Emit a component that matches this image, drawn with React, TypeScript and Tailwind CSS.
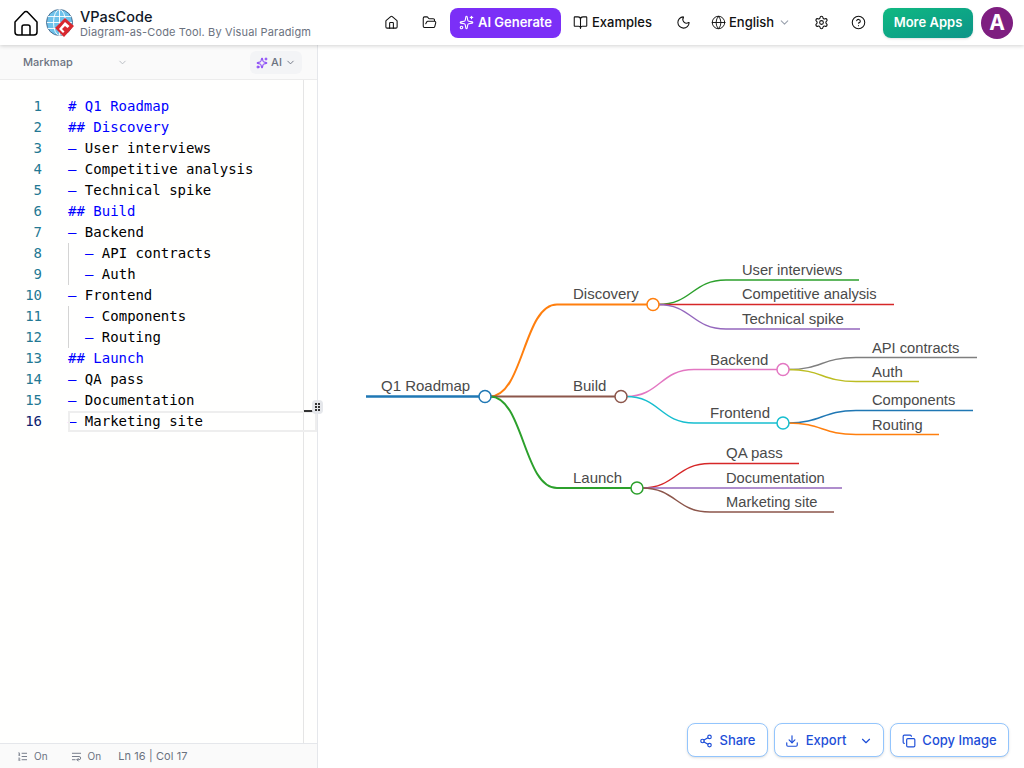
import React from "react";
import {
  BookOpen,
  ChevronDown,
  CircleHelp,
  Copy,
  FolderOpen,
  Globe,
  House,
  ListOrdered,
  Moon,
  Settings,
  Share2,
  Sparkles,
  Download,
  WrapText,
} from "lucide-react";

type Line = { text: string; kind: "head" | "item"; indent?: boolean };

const lines: Line[] = [
  { text: "# Q1 Roadmap", kind: "head" },
  { text: "## Discovery", kind: "head" },
  { text: "User interviews", kind: "item" },
  { text: "Competitive analysis", kind: "item" },
  { text: "Technical spike", kind: "item" },
  { text: "## Build", kind: "head" },
  { text: "Backend", kind: "item" },
  { text: "API contracts", kind: "item", indent: true },
  { text: "Auth", kind: "item", indent: true },
  { text: "Frontend", kind: "item" },
  { text: "Components", kind: "item", indent: true },
  { text: "Routing", kind: "item", indent: true },
  { text: "## Launch", kind: "head" },
  { text: "QA pass", kind: "item" },
  { text: "Documentation", kind: "item" },
  { text: "Marketing site", kind: "item" },
];

const curve = (x1: number, y1: number, x2: number, y2: number) => {
  const mid = (x1 + x2) / 2;
  return `M${x1} ${y1}C${mid} ${y1} ${mid} ${y2} ${x2} ${y2}`;
};

const links = [
  { d: "M366 396.5H485", color: "#1f77b4", w: 2.5 },
  { d: curve(490, 396.5, 557, 304.5) + "H653", color: "#ff7f0e", w: 2 },
  { d: "M490 396.5H621", color: "#8c564b", w: 2 },
  { d: curve(490, 396.5, 557, 488) + "H637", color: "#2ca02c", w: 2 },
  { d: curve(658, 304.5, 726, 280) + "H859", color: "#2ca02c", w: 1.5 },
  { d: "M658 304.5H894", color: "#d62728", w: 1.5 },
  { d: curve(658, 304.5, 726, 329) + "H860", color: "#9467bd", w: 1.5 },
  { d: curve(626, 396.5, 694, 369.5) + "H783", color: "#e377c2", w: 1.5 },
  { d: curve(626, 396.5, 694, 423) + "H783", color: "#17becf", w: 1.5 },
  { d: curve(788, 369.5, 856, 357.5) + "H977", color: "#7f7f7f", w: 1.5 },
  { d: curve(788, 369.5, 856, 381.5) + "H919", color: "#bcbd22", w: 1.5 },
  { d: curve(788, 423, 856, 410.5) + "H973", color: "#1f77b4", w: 1.5 },
  { d: curve(788, 423, 856, 434.5) + "H939", color: "#ff7f0e", w: 1.5 },
  { d: curve(642, 488, 710, 463.5) + "H799", color: "#d62728", w: 1.5 },
  { d: "M642 488H842", color: "#9467bd", w: 1.5 },
  { d: curve(642, 488, 710, 512) + "H834", color: "#8c564b", w: 1.5 },
];

const circles = [
  { x: 485, y: 396.5, color: "#1f77b4" },
  { x: 653, y: 304.5, color: "#ff7f0e" },
  { x: 621, y: 396.5, color: "#8c564b" },
  { x: 637, y: 488, color: "#2ca02c" },
  { x: 783, y: 369.5, color: "#e377c2" },
  { x: 783, y: 423, color: "#17becf" },
];

const labels = [
  { x: 381, y: 391, text: "Q1 Roadmap" },
  { x: 573, y: 299, text: "Discovery" },
  { x: 573, y: 391, text: "Build" },
  { x: 573, y: 483, text: "Launch" },
  { x: 742, y: 275, text: "User interviews", small: true },
  { x: 742, y: 299, text: "Competitive analysis", small: true },
  { x: 742, y: 324, text: "Technical spike" },
  { x: 710, y: 365, text: "Backend" },
  { x: 710, y: 418, text: "Frontend" },
  { x: 872, y: 353, text: "API contracts", small: true },
  { x: 872, y: 377, text: "Auth" },
  { x: 872, y: 405, text: "Components", small: true },
  { x: 872, y: 430, text: "Routing", small: true },
  { x: 726, y: 458, text: "QA pass" },
  { x: 726, y: 483, text: "Documentation", small: true },
  { x: 726, y: 507, text: "Marketing site", small: true },
];

const HomeMark = () => (
  <svg width="24" height="26" viewBox="0 0 24 26" fill="none" stroke="#000" strokeWidth="1.5" strokeLinejoin="round">
    <path d="M1 12L10 2.5a2.6 2.6 0 0 1 4 0L23 12V22a3 3 0 0 1-3 3H4a3 3 0 0 1-3-3Z" />
    <path d="M8 25V17a2 2 0 0 1 2-2h4a2 2 0 0 1 2 2v8" />
  </svg>
);

const Logo = () => (
  <svg width="28" height="28" viewBox="0 0 28 28" fill="none">
    <circle cx="13.5" cy="13.5" r="13" fill="#6ec1ea" stroke="#4a6f92" />
    <g stroke="#fff" strokeWidth="0.9">
      <ellipse cx="13.5" cy="13.5" rx="6" ry="13" />
      <path d="M13.5 1v25M2 7.5h23M1 13.5h25M2 19.5h23" />
    </g>
    <path d="M19 9l9 8-10 11-9-9z" fill="#d8282f" />
    <path d="M19 13l4.5 4-2 2-2.5-2-3 3 2.5 2.5-1.5 1.5-4-4z" fill="#fff" />
  </svg>
);

const MindMap = () => (
  <svg className="h-[723px] w-[706px]" viewBox="318 45 706 723" fill="none">
    {links.map((l) => (
      <path key={l.d} d={l.d} stroke={l.color} strokeWidth={l.w} />
    ))}
    {circles.map((c) => (
      <circle key={c.x + "-" + c.y} cx={c.x} cy={c.y} r="6" fill="#fff" stroke={c.color} strokeWidth="1.5" />
    ))}
    {labels.map((l) => (
      <text
        key={l.text}
        x={l.x}
        y={l.y}
        fill="#4a4a4a"
        className={`font-['Liberation_Sans',sans-serif] ${l.small ? "text-[14.7px]" : "text-[15px]"}`}
      >
        {l.text}
      </text>
    ))}
  </svg>
);

export default function App() {
  return (
    <div className="flex h-[768px] w-[1024px] flex-col overflow-hidden bg-white font-['Inter',sans-serif]">
      <header className="relative z-10 flex h-[45px] shrink-0 items-center bg-white pr-[11px] shadow-[0_1px_4px_rgba(0,0,0,0.18)]">
        <div className="ml-[14px]">
          <HomeMark />
        </div>
        <div className="ml-[8px]">
          <Logo />
        </div>
        <div className="ml-[6px] flex flex-col pt-[1px]">
          <span className="text-[14.5px] leading-[17px] font-medium text-[#111827]">VPasCode</span>
          <span className="text-[11px] leading-[14px] tracking-[0.15px] text-[#6b7280]">
            Diagram-as-Code Tool. By Visual Paradigm
          </span>
        </div>
        <div className="ml-auto flex items-center text-[#111]">
          <button className="flex h-[30px] w-[38px] items-center justify-center">
            <House size={15} strokeWidth={1.7} />
          </button>
          <button className="flex h-[30px] w-[38px] items-center justify-center">
            <FolderOpen size={15} strokeWidth={1.7} />
          </button>
          <button className="ml-[2px] flex h-[30px] w-[111px] items-center justify-center gap-[4px] rounded-lg bg-[#7b2ff7] text-[13px] font-semibold text-white">
            <Sparkles size={15} strokeWidth={1.8} />
            AI Generate
          </button>
          <button className="flex h-[30px] w-[103px] items-center justify-center gap-[4px] text-[13px] font-medium">
            <BookOpen size={15} strokeWidth={1.7} />
            Examples
          </button>
          <button className="flex h-[30px] w-[38px] items-center justify-center">
            <Moon size={15} strokeWidth={1.7} />
          </button>
          <button className="flex h-[30px] w-[100px] items-center pl-[9px] text-[13px] font-medium">
            <Globe size={15} strokeWidth={1.5} />
            <span className="ml-[3px]">English</span>
            <ChevronDown size={13} className="ml-[4px] text-[#9ca3af]" />
          </button>
          <button className="flex h-[30px] w-[38px] items-center justify-center">
            <Settings size={15} strokeWidth={1.7} />
          </button>
          <button className="flex h-[30px] w-[37px] items-center justify-center">
            <CircleHelp size={15} strokeWidth={1.7} />
          </button>
          <button className="ml-[6px] flex h-[30px] w-[90px] items-center justify-center rounded-lg bg-gradient-to-br from-[#10b981] to-[#0d9488] text-[13px] font-semibold text-white shadow-sm">
            More Apps
          </button>
          <div className="ml-[8px] flex h-[32px] w-[32px] items-center justify-center rounded-full bg-[#7e1e80] text-[21px] font-bold text-white">
            A
          </div>
        </div>
      </header>

      <main className="relative flex min-h-0 flex-1">
        <section className="flex w-[318px] shrink-0 flex-col border-r border-[#e5e7eb] bg-[#fffffe]">
          <div className="flex h-[35px] shrink-0 items-center border-b border-[#ececec] bg-[#fafafa] pl-[23px] pr-[15px] pt-[1px]">
            <span className="text-[11px] font-medium text-[#6b7280]">Markmap</span>
            <ChevronDown size={11} className="ml-[44px] text-[#b5b9c0]" />
            <div className="ml-auto flex h-[23px] w-[52px] items-center justify-center gap-[3px] rounded-md bg-[#f3f4f6] text-[11px] font-medium text-[#6b7280]">
              <Sparkles size={12} className="text-[#7b2ff7]" />
              AI
              <ChevronDown size={11} />
            </div>
          </div>

          <div className="flex min-h-0 flex-1">
            <div className="relative min-w-0 flex-1 pt-[16px] font-['DejaVu_Sans_Mono',monospace] text-[14px] leading-[21px]">
              {lines.map((line, i) => {
                const active = i === lines.length - 1;
                return (
                  <div key={i} className="flex h-[21px] whitespace-pre">
                    <span className={`w-[42px] shrink-0 text-right ${active ? "text-[#0b216f]" : "text-[#237893]"}`}>
                      {i + 1}
                    </span>
                    <span className={`ml-[26px] flex-1 ${line.indent ? "border-l border-[#d4d4d4] pl-[16px]" : ""}`}>
                      {line.kind === "head" ? (
                        <span className="text-[#0000ff]">{line.text}</span>
                      ) : (
                        <>
                          <span className="text-[#0000ff]">– </span>
                          <span className="text-black">{line.text}</span>
                        </>
                      )}
                    </span>
                  </div>
                );
              })}
              <div className="absolute left-[68px] right-[-14px] top-[331px] h-[21px] border-2 border-[#eeeeee]" />
            </div>
            <div className="w-[14px] shrink-0 border-l border-[#e5e5e5]" />
          </div>

          <div className="flex h-[25px] shrink-0 items-center border-t border-[#e5e7eb] bg-[#fafafa] pl-[17px] text-[10px] text-[#6b7280]">
            <ListOrdered size={11} />
            <span className="ml-[6px]">On</span>
            <WrapText size={11} className="ml-[23px]" />
            <span className="ml-[6px]">On</span>
            <span className="ml-[17px] text-[11px] tracking-[0.1px]">Ln 16 | Col 17</span>
          </div>
        </section>

        <section className="min-w-0 flex-1">
          <MindMap />
        </section>

        {/* drag handle sits over the split */}
        <div className="absolute left-[304px] top-[365px] h-[2px] w-[9px] bg-[#333]" />
        <div className="absolute left-[312px] top-[355px] flex h-[14px] w-[11px] items-center justify-center rounded-sm bg-[#e5e7eb]">
          <div className="grid grid-cols-2 gap-[1px]">
            {[0, 1, 2, 3, 4, 5].map((n) => (
              <span key={n} className="h-[2px] w-[2px] bg-[#333]" />
            ))}
          </div>
        </div>

        <div className="absolute bottom-[11px] right-[15px] flex gap-[6px] text-[13px] font-medium text-[#1d4ed8]">
          <button className="flex h-[34px] w-[81px] items-center justify-center gap-[6px] rounded-lg border border-[#93c5fd] bg-white pt-[1px] shadow-sm">
            <Share2 size={14} />
            Share
          </button>
          <button className="flex h-[34px] w-[110px] items-center justify-center gap-[7px] rounded-lg border border-[#93c5fd] bg-white pt-[1px] shadow-sm">
            <Download size={14} />
            Export
            <ChevronDown size={14} className="ml-[6px]" />
          </button>
          <button className="flex h-[34px] w-[119px] items-center justify-center gap-[6px] rounded-lg border border-[#93c5fd] bg-white pt-[1px] shadow-sm">
            <Copy size={14} />
            Copy Image
          </button>
        </div>
      </main>
    </div>
  );
}
